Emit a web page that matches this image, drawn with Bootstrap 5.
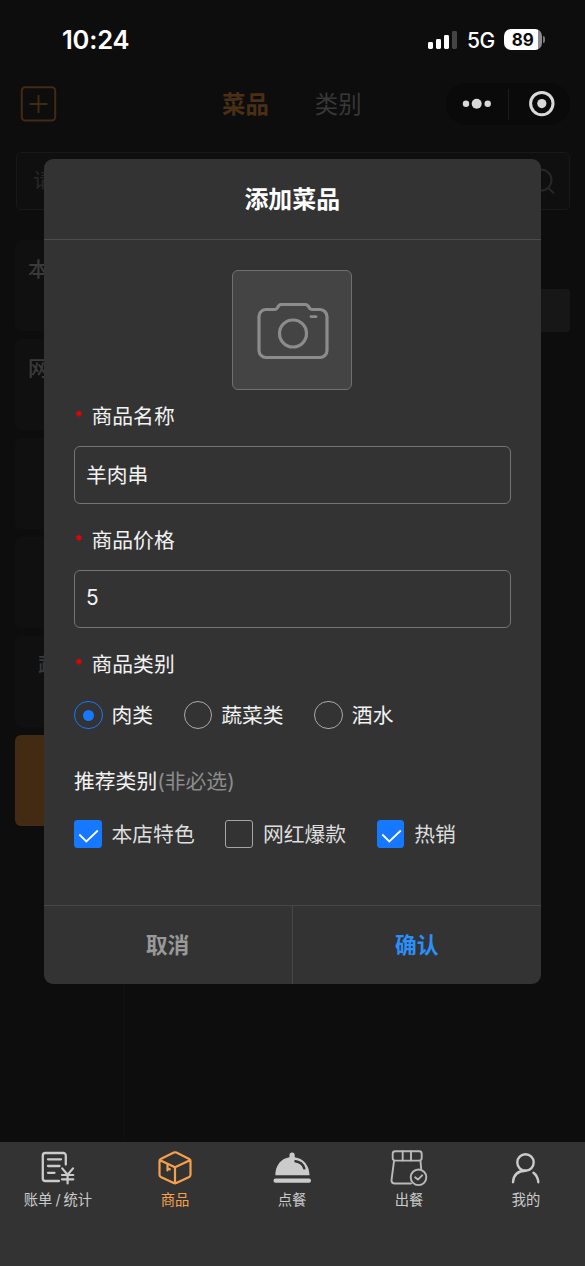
<!DOCTYPE html>
<html lang="zh-CN">
<head>
<meta charset="utf-8">
<meta name="viewport" content="width=device-width, initial-scale=1">
<title>添加菜品</title>
<link href="https://cdn.jsdelivr.net/npm/bootstrap@5.3.0/dist/css/bootstrap.min.css" rel="stylesheet">
<style>
  body { background: #0d0d0d; font-family: Inter, "Noto Sans CJK SC", sans-serif; color: #f2f2f2; }
  svg { display: block; flex: none; }
  .screen { width: 585px; height: 1266px; }
  .statusbar { height: 78px; padding: 1px 40px 0 62px; color: #fff; }
  .clock { font-size: 25.5px; font-weight: 600; line-height: 1; letter-spacing: -.2px; }
  .network { font-size: 21px; font-weight: 500; line-height: 1; margin: 1px 9px 0 10px; letter-spacing: -.3px; }
  .battery { width: 37.5px; height: 21px; border-radius: 7px; background: linear-gradient(90deg, #fff 89%, #8a8a8a 89%); color: #0d0d0d; font-size: 17px; font-weight: 700; line-height: 22px; }
  .battery-tip { width: 2.5px; height: 7px; margin-left: 1px; border-radius: 0 3px 3px 0; background: #777; }
  .topbar { height: 52px; padding: 0 15px 0 20px; }
  .tab-label { font-size: 23.4px; line-height: 34px; padding-top: 1px; color: #383838; }
  .tab-label.chosen { color: #4a2f16; font-weight: 700; }
  .capsule { width: 124px; height: 42px; border-radius: 21px; background: #0a0a0a; }
  .capsule-line { width: 1px; height: 31px; background: #1d1d1d; }
  .searchbox { height: 58px; margin: 22px 15px 0 16px; padding: 0 14px 0 16px; border: 1.5px solid #181818; border-radius: 5px; background: #0f0f0f; font-size: 20.8px; color: #272727; }
  .catalog { margin-top: 30px; height: 902px; }
  .side { width: 125px; padding-left: 15px; border-right: 2px solid #0f0f0f; gap: 8px; }
  .side-item { height: 91px; padding: 15px 13px; background: #101010; border-radius: 6px; font-size: 20.8px; line-height: 30px; color: #3a3a3a; font-weight: 500; }
  .side-item.deep { padding: 14px 23px; }
  .side-item.active { background: #432a13; }
  .goods { padding: 49px 15px 0 12px; }
  .goods-head { height: 43px; background: #171717; border-radius: 3px; }
  .bottomnav { height: 124px; background: #333; padding-top: 7px; }
  .bottomnav .cell { width: 117px; padding-right: 1px; font-size: 14.3px; line-height: 20px; color: #cbcbcb; }
  .bottomnav .cell.current { color: #f7a04b; }
  .bottomnav .cell svg { margin-bottom: 3px; }
  .dialog-box { top: 159px; left: 44px; width: 496.5px; height: 825px; border-radius: 9px; background: #333; }
  .dialog-title { height: 81px; padding-top: 1px; border-bottom: 1.5px solid #4c4c4c; font-size: 23.9px; font-weight: 700; color: #fff; }
  .dialog-form { padding: 30px 30px 0; font-size: 20.8px; line-height: 32px; }
  .upload { width: 120px; height: 120px; border: 1.5px solid #707070; border-radius: 6px; background: #444; }
  .upload svg { margin: 3px 0 0 2px; }
  .field-label { margin: 20.5px 0 14px; }
  .field-label.first { margin-top: 10px; }
  .field-label span { padding-top: 1px; margin-bottom: -1px; }
  .star { width: 17.5px; height: 32px; }
  .dialog-form .form-control { height: 57.5px; padding: 0 11px 2px; border: 1.5px solid #747474; border-radius: 6px; background: transparent; color: #f2f2f2; font-size: 20.8px; }
  .options { height: 28px; }
  .options .name { padding-top: 2px; }
  .ring { width: 28.5px; height: 28.5px; border: 1.5px solid #aaa; border-radius: 50%; margin-right: 9px; }
  .ring.on { border-color: #1677ff; }
  .ring.on::after { content: ""; width: 11px; height: 11px; border-radius: 50%; background: #1677ff; }
  .tick { width: 27.5px; height: 27.5px; border: 1.5px solid #a5a5a5; border-radius: 3px; margin-right: 10px; }
  .tick.on { border-color: #1677ff; background: #1677ff; }
  .next { margin-left: 30.7px; }
  .pick { color: #dedede; }
  .hint { color: #8c8c8c; }
  .dialog-actions { height: 79px; border-top: 1.5px solid #474747; font-size: 21.8px; font-weight: 700; }
  .dialog-actions > div + div { border-left: 1.5px solid #474747; }
  .c-cancel { color: #999; padding-right: 1px; }
  .c-ok { color: #2b8ff7; }
</style>
</head>
<body>
<div class="screen position-relative overflow-hidden d-flex flex-column">
  <header class="statusbar d-flex align-items-center flex-shrink-0">
    <span class="clock me-auto">10:24</span>
    <svg width="30" height="18" viewBox="0 0 30 18"><g fill="#fff"><rect x="1" y="11" width="5" height="7" rx="1.4"/><rect x="9" y="8" width="5" height="10" rx="1.4"/><rect x="17" y="4" width="5" height="14" rx="1.4"/></g><rect x="25" y="0" width="5" height="18" rx="1.4" fill="#444"/></svg>
    <span class="network">5G</span>
    <span class="battery text-center">89</span><span class="battery-tip"></span>
  </header>

  <nav class="topbar d-flex align-items-center flex-shrink-0">
    <svg width="37" height="37" viewBox="0 0 37 37" fill="none" stroke="#432a13" stroke-width="2"><rect x="1.8" y="1.2" width="33.4" height="33.4" rx="3.5"/><path d="M9.5 18h18M18.500 9v18"/></svg>
    <span class="tab-label chosen" style="margin-left:165px">菜品</span>
    <span class="tab-label" style="margin-left:46px">类别</span>
    <div class="capsule ms-auto d-flex align-items-center">
      <svg width="62" height="30" viewBox="0 0 62 30" fill="#d9d9d9"><circle cx="20" cy="14.700" r="3.2"/><circle cx="30.700" cy="14.700" r="5"/><circle cx="41.700" cy="14.700" r="3.2"/></svg>
      <span class="capsule-line"></span>
      <svg width="61" height="30" viewBox="0 0 61 30"><circle cx="32.800" cy="14.600" r="11.200" fill="none" stroke="#d9d9d9" stroke-width="3"/><circle cx="32.800" cy="14.600" r="4.600" fill="#d9d9d9"/></svg>
    </div>
  </nav>

  <div class="searchbox d-flex align-items-center justify-content-between flex-shrink-0">
    <span>请</span>
    <svg width="26" height="28" viewBox="0 0 26 28" fill="none" stroke="#272727" stroke-width="2"><circle cx="12" cy="13" r="10.500"/><path d="M19 20.500l6 6"/></svg>
  </div>

  <main class="catalog d-flex flex-shrink-0">
    <aside class="side d-flex flex-column">
      <div class="side-item">本</div>
      <div class="side-item">网</div>
      <div class="side-item"></div>
      <div class="side-item"></div>
      <div class="side-item deep">蔬</div>
      <div class="side-item active"></div>
    </aside>
    <section class="goods flex-grow-1"><div class="goods-head"></div></section>
  </main>

  <footer class="bottomnav d-flex flex-shrink-0">
    <div class="cell d-flex flex-column align-items-center">
      <svg width="38" height="38" viewBox="0 0 38 38" fill="none" stroke="#cbcbcb" stroke-width="2.300" stroke-linecap="round" stroke-linejoin="round"><path d="M20 32H6.300a2.500 2.500 0 0 1-2.500-2.500V6.500a2.500 2.500 0 0 1 2.500-2.500h18a2.500 2.500 0 0 1 2.500 2.500v9M9 10.300h13M9 17h11.500M9 23.800h6.500"/><path d="M23.200 19.400l5.400 6.300 5.400-6.300M28.600 25.700v8.700M23 26h11.300M23 30.300h11.300" stroke-width="2.200"/></svg>
      <span>账单<span style="margin:0 3px">/</span>统计</span>
    </div>
    <div class="cell current d-flex flex-column align-items-center">
      <svg width="38" height="38" viewBox="0 0 38 38" fill="none" stroke="#f7a04b" stroke-width="2.200" stroke-linejoin="round" stroke-linecap="round"><path d="M17.800 3.600a3 3 0 0 1 2.600 0L33.200 10a2.300 2.300 0 0 1 1.300 2.200v13.600a2.500 2.500 0 0 1-1.300 2.200l-12.900 6a3 3 0 0 1-2.600 0l-12.900-6a2.500 2.500 0 0 1-1.300-2.200V12.200A2.300 2.300 0 0 1 4.800 10zM4 11.300l15 7 15-7M19 18.300V34"/><path d="M11.500 15v6.500M11.500 19.300l2.300 1" stroke-width="2.200"/></svg>
      <span>商品</span>
    </div>
    <div class="cell d-flex flex-column align-items-center">
      <svg width="38" height="38" viewBox="0 0 38 38" fill="#cbcbcb"><rect x=".5" y="29.500" width="37.500" height="4.300" rx="2"/><path d="M2.300 26.300C2.300 16 8.500 9.300 16.500 8.200V6a2.500 2.500 0 0 1 5.200 0v2.200C30 9.300 36.500 16 36.500 26.300z"/><path d="M22.500 12.300c4.700.8 7.600 3.200 8.800 7" fill="none" stroke="#333" stroke-width="2.500" stroke-linecap="round"/></svg>
      <span>点餐</span>
    </div>
    <div class="cell d-flex flex-column align-items-center">
      <svg width="38" height="38" viewBox="0 0 38 38" fill="none" stroke="#b9b9b9" stroke-width="1.900" stroke-linecap="round" stroke-linejoin="round"><rect x="2.700" y="2.300" width="29" height="9.300" rx="2.500"/><path d="M12.700 2.300v9.300M21 2.300v9.300M4 12.200L1.500 31.200a3.300 3.300 0 0 0 3.200 3.300h16.300M30.500 12.200l.7 8"/><circle cx="28.500" cy="28.300" r="7.800"/><path d="M25.200 28.300l2.700 2.300 4.300-4.300"/></svg>
      <span>出餐</span>
    </div>
    <div class="cell d-flex flex-column align-items-center">
      <svg width="38" height="38" viewBox="0 0 38 38" fill="none" stroke="#cbcbcb" stroke-width="2.400" stroke-linecap="round"><circle cx="18.500" cy="13.500" r="8.200"/><path d="M6 33.200C6.500 26 11 21.800 18.500 21.700M26.500 23.800c3 2.300 4.500 5.400 4.800 9.400"/></svg>
      <span>我的</span>
    </div>
  </footer>

  <div class="dialog-box position-absolute d-flex flex-column overflow-hidden">
    <div class="dialog-title d-flex align-items-center justify-content-center flex-shrink-0">添加菜品</div>
    <form class="dialog-form flex-grow-1">
      <div class="upload mx-auto d-flex align-items-center justify-content-center">
        <svg width="76" height="62" viewBox="0 0 76 62" fill="none" stroke="#8c8c8c" stroke-width="3.200" stroke-linecap="round" stroke-linejoin="round"><path d="M10.500 8.500h9.500c3 0 2.500-5 6-5h24.500c3.500 0 3.500 5 6 5H65a7 7 0 0 1 7 7v34a7 7 0 0 1-7 7H11A7 7 0 0 1 4 49.500V15.500A7 7 0 0 1 10.500 8.500z"/><circle cx="38" cy="32.500" r="13.500"/><path d="M56 15.700h5" stroke-width="2.800"/></svg>
      </div>

      <div class="field-label first d-flex"><svg class="star" viewBox="0 0 18 32"><path d="M5 10.500v6M2.400 12l5.200 3M7.600 12l-5.200 3" stroke="#f00000" stroke-width="1.600"/></svg><span>商品名称</span></div>
      <input class="form-control shadow-none" type="text" value="羊肉串">

      <div class="field-label d-flex"><svg class="star" viewBox="0 0 18 32"><path d="M5 10.500v6M2.400 12l5.200 3M7.600 12l-5.200 3" stroke="#f00000" stroke-width="1.600"/></svg><span>商品价格</span></div>
      <input class="form-control shadow-none" type="text" value="5">

      <div class="field-label d-flex"><svg class="star" viewBox="0 0 18 32"><path d="M5 10.500v6M2.400 12l5.200 3M7.600 12l-5.200 3" stroke="#f00000" stroke-width="1.600"/></svg><span>商品类别</span></div>
      <div class="options d-flex align-items-center" style="margin-top:21px">
        <span class="ring on d-flex align-items-center justify-content-center"></span><span class="name">肉类</span>
        <span class="ring next"></span><span class="name">蔬菜类</span>
        <span class="ring next"></span><span class="name">酒水</span>
      </div>

      <div style="margin-top:37px">推荐类别<span class="hint">(非必选)</span></div>
      <div class="options pick d-flex align-items-center" style="margin-top:22px">
        <span class="tick on"><svg width="25" height="25" viewBox="0 0 25 25" fill="none" stroke="#fff" stroke-width="1.800"><path d="M4.300 13.500l7 7 11.500-11"/></svg></span><span class="name">本店特色</span>
        <span class="tick next"></span><span class="name">网红爆款</span>
        <span class="tick on next"><svg width="25" height="25" viewBox="0 0 25 25" fill="none" stroke="#fff" stroke-width="1.800"><path d="M4.300 13.500l7 7 11.500-11"/></svg></span><span class="name">热销</span>
      </div>
    </form>
    <div class="dialog-actions d-flex flex-shrink-0">
      <div class="w-50 c-cancel d-flex align-items-center justify-content-center">取消</div>
      <div class="w-50 c-ok d-flex align-items-center justify-content-center">确认</div>
    </div>
  </div>
</div>
<script src="https://cdn.jsdelivr.net/npm/bootstrap@5.3.0/dist/js/bootstrap.bundle.min.js"></script>
</body>
</html>
